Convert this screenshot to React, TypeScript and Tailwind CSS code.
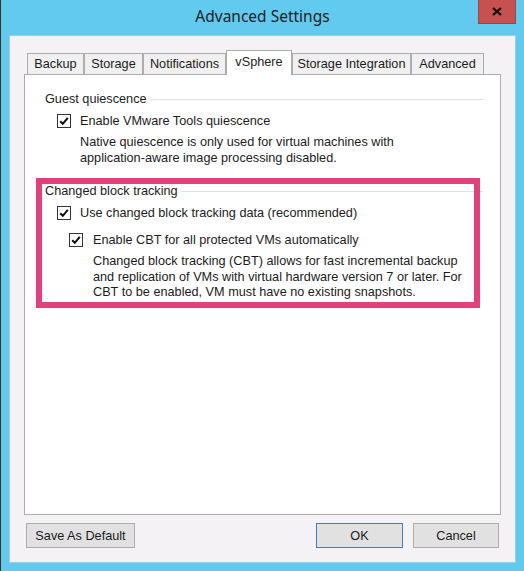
import React from "react";

const tabs = [
  { label: "Backup", width: "w-[57px]" },
  { label: "Storage", width: "w-[59px]" },
  { label: "Notifications", width: "w-[83px]" },
  { label: "vSphere", width: "w-[66px]", active: true },
  { label: "Storage Integration", width: "w-[119px]" },
  { label: "Advanced", width: "w-[73px]" },
];

const CheckBox: React.FC = () => (
  <span className="w-[14px] h-[14px] border border-[#333333] bg-white flex items-center justify-center shrink-0">
    <svg width="12" height="12" viewBox="0 0 12 12">
      <path d="M2.2 6.2 L4.8 8.8 L9.8 2.8" fill="none" stroke="#111" strokeWidth="2.1" />
    </svg>
  </span>
);

const GroupTitle: React.FC<{ text: string }> = ({ text }) => (
  <div className="flex items-center h-[16px] pr-[17px]">
    <span className="leading-[16px]">{text}</span>
    <span className="flex-1 h-px bg-[#dcdfe6] ml-[3px]" />
  </div>
);

export default function App() {
  return (
    <div
      className="w-[524px] h-[571px] bg-[#62c9ef] border-l border-[#3a3025] flex flex-col text-[#1b1b1b] text-[12.7px]"
      style={{ fontFamily: '"Liberation Sans", Arial, sans-serif' }}
    >
      {/* title bar */}
      <div className="relative h-[35px] shrink-0 flex items-center justify-center">
        <span
          className="text-[15.5px] text-[#222] -mt-px"
          style={{ fontFamily: '"Noto Sans", "Open Sans", sans-serif' }}
        >
          Advanced Settings
        </span>
        <div className="absolute top-0 right-[8px] w-[38px] h-[24px] bg-[#c75050] border border-[#a84040] border-t-0 flex items-center justify-center">
          <svg width="10" height="9" viewBox="0 0 10 9">
            <path d="M1 1 L9 8 M9 1 L1 8" stroke="#111" strokeWidth="2.2" />
          </svg>
        </div>
      </div>

      {/* client area */}
      <div className="mx-[8px] mb-[8px] flex-1 bg-[#f5f2f5] border border-[#9ccde0] flex flex-col pt-[14px] px-[14px] pb-[14px]">
        {/* tabs */}
        <div className="h-[24px] flex items-end pl-[3px] relative z-10">
          {tabs.map((t) =>
            t.active ? (
              <div
                key={t.label}
                className={`${t.width} h-[25px] -mb-px bg-white border border-b-0 border-[#acacac] flex justify-center pt-[3px] leading-[16px]`}
              >
                {t.label}
              </div>
            ) : (
              <div
                key={t.label}
                className={`${t.width} h-[21px] bg-[#f0f0f0] border border-b-0 border-[#acacac] flex justify-center pt-[2px] leading-[16px]`}
              >
                {t.label}
              </div>
            )
          )}
        </div>

        {/* panel */}
        <div className="h-[441px] bg-white border border-[#acacac] flex flex-col pt-[16px] relative">
          {/* Guest quiescence */}
          <div className="pl-[20px]">
            <GroupTitle text="Guest quiescence" />
            <div className="flex items-center h-[16px] mt-[6px] pl-[12px] gap-[9px]">
              <CheckBox />
              <span className="leading-[16px]">Enable VMware Tools quiescence</span>
            </div>
            <p className="pl-[35px] mt-[5px] leading-[16px]">
              Native quiescence is only used for virtual machines with
              <br />
              application-aware image processing disabled.
            </p>
          </div>

          {/* Changed block tracking */}
          <div className="pl-[20px] mt-[17px] relative">
            <GroupTitle text="Changed block tracking" />
            <div className="flex items-center h-[17px] mt-[5px] pl-[12px] gap-[9px]">
              <CheckBox />
              <span className="leading-[16px]">Use changed block tracking data (recommended)</span>
            </div>
            <div className="flex items-center h-[16px] mt-[11px] pl-[24px] gap-[10px]">
              <CheckBox />
              <span className="leading-[16px]">Enable CBT for all protected VMs automatically</span>
            </div>
            <p className="pl-[48px] mt-[6px] leading-[15.5px]">
              Changed block tracking (CBT) allows for fast incremental backup
              <br />
              and replication of VMs with virtual hardware version 7 or later. For
              <br />
              CBT to be enabled, VM must have no existing snapshots.
            </p>
            {/* highlight annotation */}
            <div className="absolute left-[11px] right-[20px] -top-[5px] -bottom-[7px] border-[6px] border-[#e2417b] pointer-events-none" />
          </div>
        </div>

        {/* buttons */}
        <div className="flex mt-[8px] px-[2px] gap-[10px]">
          <button className="w-[109px] h-[25px] bg-[#e1e1e1] border border-[#adadad] text-[12.7px] leading-[16px]">
            Save As Default
          </button>
          <div className="flex-1" />
          <button className="w-[87px] h-[25px] bg-[#e1e1e1] border border-[#3c7fb1] text-[12.7px] leading-[16px]">
            OK
          </button>
          <button className="w-[86px] h-[25px] bg-[#e1e1e1] border border-[#adadad] text-[12.7px] leading-[16px]">
            Cancel
          </button>
        </div>
      </div>
    </div>
  );
}
